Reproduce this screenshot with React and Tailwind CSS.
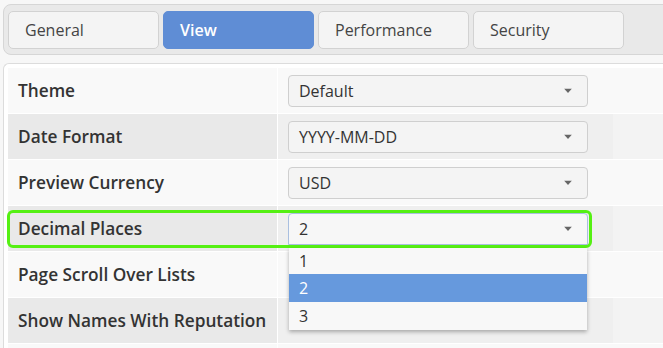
import React from "react";

function Caret() {
  return (
    <svg width="8" height="5" viewBox="0 0 8 5" className="absolute right-[15px] top-1/2 -translate-y-1/2">
      <path d="M0 0 L8 0 L4 4.5 Z" fill="#666" />
    </svg>
  );
}

function Select({ value, focused }) {
  return (
    <div
      className={
        "relative w-[300px] h-[32px] rounded-[4px] border flex items-center pl-[10px] text-[16px] text-[#333] " +
        (focused ? "border-[#a9bfe0] bg-[#f7f7f7] rounded-b-none" : "border-[#cfcfcf] bg-[#f4f4f4]")
      }
    >
      {value}
      <Caret />
    </div>
  );
}

const rows = [
  { label: "Theme", value: "Default" },
  { label: "Date Format", value: "YYYY-MM-DD" },
  { label: "Preview Currency", value: "USD" },
  { label: "Decimal Places", value: "2", focused: true },
  { label: "Page Scroll Over Lists", value: null },
  { label: "Show Names With Reputation", value: null },
  { label: "", value: null },
];

export default function App() {
  const tabs = ["General", "View", "Performance", "Security"];
  return (
    <div
      className="relative w-[663px] h-[348px] overflow-hidden bg-[#f7f7f7]"
      style={{ fontFamily: '"Open Sans", "Noto Sans", sans-serif' }}
    >
      <div className="ml-[3px] mt-[4px] w-[700px] h-[51px] rounded-l-[8px] border border-[#d6d6d6] bg-[#e9e9e9] flex items-center gap-[4px] pl-[4px]">
        {tabs.map((t) => (
          <div
            key={t}
            className={
              "w-[151px] h-[38px] rounded-[5px] flex items-center pl-[16px] text-[16px] " +
              (t === "View"
                ? "bg-[#5f8dd5] text-white font-semibold border border-[#5f8dd5]"
                : "bg-[#f4f4f4] text-[#444] border border-[#d2d2d2]")
            }
          >
            {t}
          </div>
        ))}
      </div>
      <div className="ml-[3px] mt-[8px] w-[700px] h-[300px] rounded-tl-[6px] border-l border-t border-[#dcdcdc] bg-white pt-[4px] pl-[4px]">
        {rows.map((r, i) => {
          const even = i % 2 === 1;
          return (
            <div key={i} className="flex h-[46px] border-b border-white">
              <div
                className={
                  "w-[270px] border-r border-white flex items-center pl-[10px] text-[17.25px] font-semibold text-[#333] whitespace-nowrap " +
                  (even ? "bg-[#e9e9e9]" : "bg-[#f9f9f9]")
                }
              >
                {r.label}
              </div>
              <div
                className={
                  "w-[335px] flex items-center pl-[10px] " + (even ? "bg-[#efefef]" : "bg-[#f9f9f9]")
                }
              >
                {r.value !== null && <Select value={r.value} focused={r.focused} />}
              </div>
              <div className={"flex-1 " + (even ? "bg-[#f3f3f3]" : "bg-[#f9f9f9]")} />
            </div>
          );
        })}
      </div>

      {/* green highlight */}
      <div className="absolute left-[7px] top-[210px] w-[585px] h-[38px] rounded-[6px] border-[3px] border-[#55f013] pointer-events-none" />

      {/* dropdown list */}
      <div className="absolute left-[289px] top-[248px] w-[298px] bg-[#f8f8f8] shadow-[0_2px_4px_rgba(0,0,0,0.3)] text-[16px] text-[#333]">
        <div className="h-[26px] flex items-center pl-[10px]">1</div>
        <div className="h-[28px] flex items-center pl-[10px] bg-[#6699dd] text-white">2</div>
        <div className="h-[28px] flex items-center pl-[10px]">3</div>
      </div>
    </div>
  );
}
